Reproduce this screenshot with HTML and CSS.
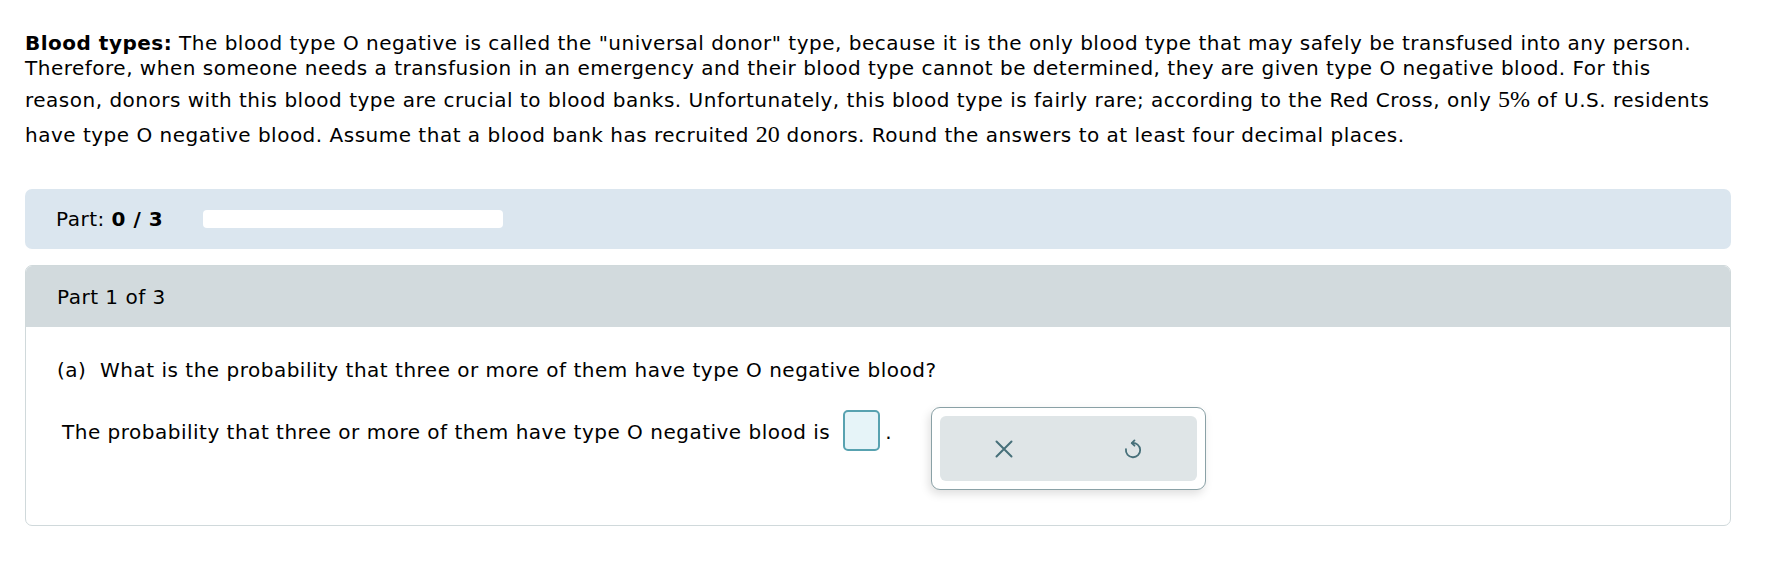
FILE: index.html
```html
<!DOCTYPE html>
<html lang="en">
<head>
<meta charset="utf-8">
<title>Blood types</title>
<link rel="stylesheet" href="styles.css">
</head>
<body>
<div class="page">
  <p class="intro"><b>Blood types:</b> The blood type O negative is called the "universal donor" type, because it is the only blood type that may safely be transfused into any person.<br>Therefore, when someone needs a transfusion in an emergency and their blood type cannot be determined, they are given type O negative blood. For this<br>reason, donors with this blood type are crucial to blood banks. Unfortunately, this blood type is fairly rare; according to the Red Cross, only <span class="math">5%</span> of U.S. residents<br>have type O negative blood. Assume that a blood bank has recruited <span class="math">20</span> donors. Round the answers to at least four decimal places.</p>

  <div class="progress-panel">
    <span class="progress-label">Part: <b>0 / 3</b></span>
    <span class="progress-bar"></span>
  </div>

  <div class="card">
    <div class="card-header">Part 1 of 3</div>
    <div class="card-body">
      <div class="question">(a)&nbsp; What is the probability that three or more of them have type O negative blood?</div>
      <div class="answer-row">
        <div class="answer-line">The probability that three or more of them have type O negative blood is <span class="answer-box"></span>.</div>
        <div class="tool-group">
          <div class="tool-inner">
            <button class="tool-btn" aria-label="Clear">
              <svg width="20" height="20" viewBox="0 0 20 20" fill="none" stroke="#47707a" stroke-width="2" stroke-linecap="round"><path d="M2.5 2.5 L17.5 17.5 M17.5 2.5 L2.5 17.5"/></svg>
            </button>
            <button class="tool-btn" aria-label="Undo">
              <svg width="22" height="22" viewBox="0 0 24 24" fill="none" stroke="#47707a" stroke-width="2" stroke-linecap="round" stroke-linejoin="round"><path d="M11 5.5 A7.8 7.8 0 1 1 4.3 12.2"/><path d="M13.6 2.6 L10.6 5.5 L13.6 8.4"/></svg>
            </button>
          </div>
        </div>
      </div>
    </div>
  </div>
</div>
</body>
</html>
```

FILE: styles.css
```css
html, body {
  margin: 0;
  padding: 0;
  background: #fff;
}

body {
  font-family: "DejaVu Sans", Verdana, sans-serif;
  font-size: 20px;
  letter-spacing: 0.5px;
  color: #000;
}

.page {
  padding: 0 34px 40px 25px;
}

.intro {
  margin: 0;
  padding-top: 31px;
  line-height: 25px;
  white-space: nowrap;
}

.intro b {
  font-weight: bold;
}

.math {
  display: inline-block;
  font-family: "Liberation Serif", "Times New Roman", serif;
  font-size: 24px;
  letter-spacing: 0;
  line-height: 25px;
  padding-top: 6px;
  padding-bottom: 4px;
}

.progress-panel {
  margin-top: 38px;
  height: 60px;
  background: #dbe6ef;
  border-radius: 7px;
  display: flex;
  align-items: center;
  padding-left: 31px;
}

.progress-label {
  width: 147px;
}

.progress-label b {
  font-weight: bold;
}

.progress-bar {
  width: 300px;
  height: 18px;
  background: #fff;
  border-radius: 4px;
}

.card {
  margin-top: 16px;
  border: 1px solid #d0d9db;
  border-radius: 7px;
  overflow: hidden;
}

.card-header {
  height: 61px;
  background: #d2dadd;
  display: flex;
  align-items: center;
  padding-left: 31px;
}

.card-body {
  padding: 31px 31px 35px 31px;
}

.question {
  line-height: 25px;
}

.answer-row {
  margin-top: 24px;
  display: flex;
  align-items: flex-start;
}

.answer-line {
  margin-top: 3px;
  padding-left: 5px;
  line-height: 25px;
}

.answer-box {
  display: inline-block;
  box-sizing: border-box;
  width: 37px;
  height: 41px;
  margin: 0 5px 0 6px;
  vertical-align: -12px;
  background: #e6f4f8;
  border: 2px solid #58a2b0;
  border-radius: 5px;
}

.tool-group {
  margin-left: 39px;
  box-sizing: border-box;
  width: 275px;
  height: 83px;
  padding: 8px;
  border: 1px solid #8aa1a6;
  border-radius: 9px;
  background: #fff;
  box-shadow: -2px 4px 10px rgba(0, 0, 0, 0.13);
}

.tool-inner {
  display: flex;
  height: 100%;
  background: #dfe5e7;
  border-radius: 6px;
}

.tool-btn {
  flex: 1;
  display: flex;
  align-items: center;
  justify-content: center;
  background: transparent;
  border: 0;
  padding: 0;
  margin: 0;
  cursor: pointer;
}
```
